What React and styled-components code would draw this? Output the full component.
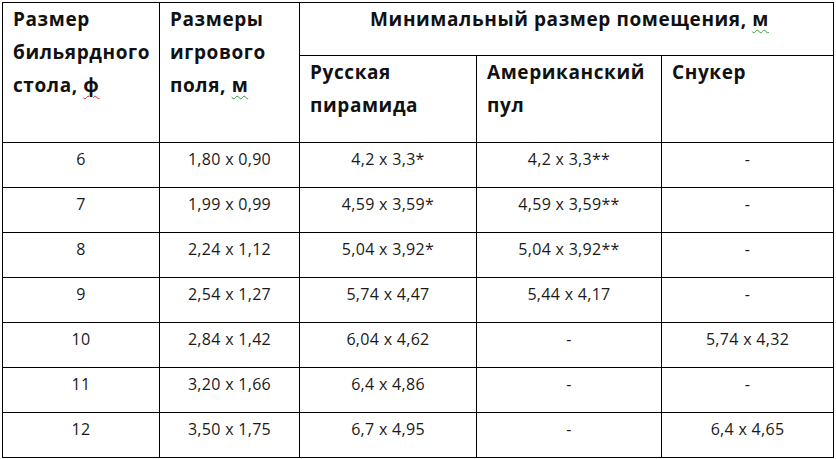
import React from "react";
import styled, { createGlobalStyle } from "styled-components";

const GlobalStyle = createGlobalStyle`
  html, body { margin: 0; padding: 0; background: #fff; }
  body { font-family: "Open Sans", "Noto Sans", sans-serif; color: #111; }
`;

const Page = styled.div`
  padding: 2px 0 0 2px;
`;

const Table = styled.table`
  border-collapse: collapse;
  table-layout: fixed;
  width: 831px;
`;

const HeadCell = styled.th`
  border: 1px solid #000;
  padding: 0 4px 0 10px;
  vertical-align: top;
  text-align: ${(p) => (p.$center ? "center" : "left")};
  font-weight: 700;
  font-size: 19px;
  letter-spacing: 0.6px;
  line-height: 33px;
  color: #111;
  height: ${(p) => p.$h}px;
  box-sizing: border-box;
`;

const DataCell = styled.td`
  border: 1px solid #000;
  padding: 6px 4px 0;
  vertical-align: top;
  text-align: center;
  font-size: 16px;
  letter-spacing: 0.3px;
  line-height: 20px;
  height: 45px;
  box-sizing: border-box;
  color: #1a1a1a;
`;

const Squiggle = styled.span`
  text-decoration: underline wavy ${(p) => p.$color};
  text-decoration-thickness: 1px;
  text-underline-offset: 3px;
`;

const rows = [
  ["6", "1,80 x 0,90", "4,2 x 3,3*", "4,2 x 3,3**", "-"],
  ["7", "1,99 x 0,99", "4,59 x 3,59*", "4,59 x 3,59**", "-"],
  ["8", "2,24 x 1,12", "5,04 x 3,92*", "5,04 x 3,92**", "-"],
  ["9", "2,54 x 1,27", "5,74 x 4,47", "5,44 x 4,17", "-"],
  ["10", "2,84 x 1,42", "6,04 x 4,62", "-", "5,74 x 4,32"],
  ["11", "3,20 x 1,66", "6,4 x 4,86", "-", "-"],
  ["12", "3,50 x 1,75", "6,7 x 4,95", "-", "6,4 x 4,65"],
];

const widths = [157, 140, 177, 185, 172];

export default function App() {
  return (
    <>
      <GlobalStyle />
      <Page>
        <Table>
          <colgroup>
            {widths.map((w, i) => (
              <col key={i} style={{ width: w }} />
            ))}
          </colgroup>
          <thead>
            <tr>
              <HeadCell rowSpan={2} $h={53}>
                Размер бильярдного стола, <Squiggle $color="#e02020">ф</Squiggle>
              </HeadCell>
              <HeadCell rowSpan={2} $h={53}>
                Размеры игрового поля, <Squiggle $color="#3a9a3a">м</Squiggle>
              </HeadCell>
              <HeadCell colSpan={3} $center $h={53}>
                Минимальный размер помещения, <Squiggle $color="#3a9a3a">м</Squiggle>
              </HeadCell>
            </tr>
            <tr>
              <HeadCell $h={87}>Русская пирамида</HeadCell>
              <HeadCell $h={87}>Американский пул</HeadCell>
              <HeadCell $h={87}>Снукер</HeadCell>
            </tr>
          </thead>
          <tbody>
            {rows.map((r, i) => (
              <tr key={i}>
                {r.map((c, j) => (
                  <DataCell key={j}>{c}</DataCell>
                ))}
              </tr>
            ))}
          </tbody>
        </Table>
      </Page>
    </>
  );
}
